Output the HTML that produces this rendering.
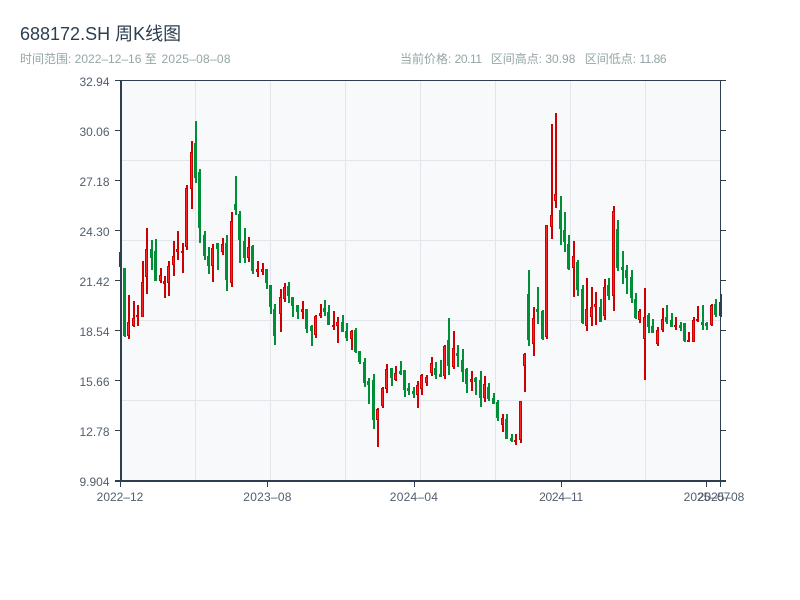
<!DOCTYPE html>
<html lang="zh">
<head>
<meta charset="utf-8">
<title>688172.SH 周K线图</title>
<style>
html,body{margin:0;padding:0;background:#fff;width:800px;height:600px;overflow:hidden}
svg{display:block}
text{font-family:"Liberation Sans","Noto Sans CJK SC",sans-serif}
</style>
</head>
<body>
<svg width="800" height="600" viewBox="0 0 800 600" xmlns="http://www.w3.org/2000/svg">
<rect x="0" y="0" width="800" height="600" fill="#fff"/>
<text x="20" y="40" font-size="18" fill="#2c3e50">688172.SH 周K线图</text>
<text x="20" y="63" font-size="12" fill="#95a5a6">时间范围: 2022–12–16 至</text>
<text x="161.5" y="63" font-size="12" fill="#95a5a6" letter-spacing="0.25">2025–08–08</text>
<text x="400" y="63" font-size="12" fill="#95a5a6">当前价格: <tspan letter-spacing="-0.45">20.11</tspan></text>
<text x="490.7" y="63" font-size="12" fill="#95a5a6">区间高点: 30.98</text>
<text x="584.7" y="63" font-size="12" fill="#95a5a6">区间低点: <tspan letter-spacing="-0.5">11.86</tspan></text>

<rect x="121" y="81" width="600" height="400" fill="#f8f9fb"/>
<path fill="#e2e5eb" d="M195 81h1v400h-1zM270 81h1v400h-1zM345 81h1v400h-1zM420 81h1v400h-1zM495 81h1v400h-1zM570 81h1v400h-1zM645 81h1v400h-1zM121 160h600v1h-600zM121 240h600v1h-600zM121 320h600v1h-600zM121 400h600v1h-600z"/>

<path fill="none" stroke="#008f36" stroke-width="2" d="M125 268V337M152 240V270M156 239V281M196 121V183M200 169V243M205 231V260M209 247V274M218 243V270M227 235V291M236 176V215M240 211V263M245 228V263M253 245V274M267 269V289M271 285V314M275 304V345M289 282V303M293 297V317M298 305V319M307 309V333M312 325V346M325 300V316M329 305V325M343 315V332M347 323V341M356 328V353M360 351V364M365 358V387M369 378V404M374 374V429M392 368V386M401 361V375M405 370V397M409 383V395M414 387V398M436 362V379M441 360V377M449 318V375M458 345V367M463 349V382M467 368V393M476 377V395M481 371V407M489 383V401M494 393V404M498 400V421M507 414V439M512 434V442M529 270V346M538 287V324M543 310V340M561 196V245M565 212V252M569 235V270M578 260V296M583 285V324M601 299V322M609 278V300M618 220V271M623 251V284M627 265V294M632 270V303M636 293V319M649 313V333M653 319V333M667 305V324M672 313V327M681 322V331M685 323V342M703 305V330M707 322V330M716 299V317"/>
<path fill="#008f36" d="M123 268h3V336h-3zM150 249h3V258h-3zM154 251h3V281h-3zM194 143h3V178h-3zM198 172h3V228h-3zM203 235h3V256h-3zM207 256h3V266h-3zM216 243h3V249h-3zM225 243h3V280h-3zM234 204h3V210h-3zM238 214h3V240h-3zM243 241h3V258h-3zM251 246h3V271h-3zM265 269h3V283h-3zM269 285h3V307h-3zM273 309h3V336h-3zM287 286h3V296h-3zM291 297h3V306h-3zM296 305h3V312h-3zM305 309h3V329h-3zM310 326h3V331h-3zM323 308h3V312h-3zM327 312h3V325h-3zM341 322h3V332h-3zM345 331h3V338h-3zM354 330h3V352h-3zM358 351h3V362h-3zM363 362h3V383h-3zM367 381h3V385h-3zM372 380h3V420h-3zM390 368h3V378h-3zM399 371h3V374h-3zM403 370h3V390h-3zM407 388h3V391h-3zM412 391h3V394h-3zM434 368h3V375h-3zM439 374h3V377h-3zM447 340h3V366h-3zM456 353h3V356h-3zM461 360h3V372h-3zM465 369h3V384h-3zM474 378h3V382h-3zM479 380h3V398h-3zM487 387h3V399h-3zM492 398h3V404h-3zM496 402h3V418h-3zM505 419h3V439h-3zM510 438h3V441h-3zM527 294h3V340h-3zM536 309h3V312h-3zM541 311h3V339h-3zM559 210h3V229h-3zM563 230h3V242h-3zM567 244h3V269h-3zM576 262h3V290h-3zM581 289h3V323h-3zM599 307h3V322h-3zM607 285h3V296h-3zM616 229h3V268h-3zM621 267h3V270h-3zM625 270h3V278h-3zM630 277h3V298h-3zM634 299h3V318h-3zM647 315h3V327h-3zM651 326h3V333h-3zM665 317h3V322h-3zM670 320h3V327h-3zM679 325h3V328h-3zM683 323h3V341h-3zM701 322h3V325h-3zM705 323h3V326h-3zM714 304h3V315h-3z"/>

<path fill="none" stroke="#cc0000" stroke-width="2" d="M120 252V267M129 295V339M134 301V327M138 305V326M143 261V317M147 228V294M161 268V283M165 276V298M169 261V296M174 241V276M178 231V260M183 243V273M187 185V250M192 141V209M213 244V282M223 238V255M232 212V287M249 237V262M258 261V277M263 263V275M281 289V332M285 283V302M303 301V319M316 315V338M321 304V318M334 311V330M338 317V343M352 330V350M378 408V447M383 387V408M387 364V393M396 366V381M418 381V408M422 374V395M427 375V386M432 357V376M445 345V379M454 331V369M472 371V391M485 376V402M503 414V432M516 434V445M521 401V443M525 353V392M534 307V356M547 225V339M552 124V239M556 113V208M574 241V297M587 278V331M592 287V326M596 292V325M605 279V320M614 206V311M640 309V323M645 288V380M658 327V346M663 308V332M676 317V330M689 332V342M694 317V342M698 306V322M712 304V326M721 294V317"/>
<path fill="#ff2222" stroke="#cc0000" stroke-width="1" d="M127.5 322.5h2V335.5h-2zM132.5 318.5h2V325.5h-2zM136.5 315.5h2V316.5h-2zM141.5 282.5h2V316.5h-2zM145.5 249.5h2V276.5h-2zM159.5 275.5h2V280.5h-2zM163.5 281.5h2V283.5h-2zM167.5 266.5h2V282.5h-2zM172.5 256.5h2V264.5h-2zM176.5 249.5h2V251.5h-2zM181.5 251.5h2V252.5h-2zM185.5 188.5h2V246.5h-2zM190.5 152.5h2V188.5h-2zM211.5 248.5h2V265.5h-2zM221.5 244.5h2V251.5h-2zM230.5 221.5h2V282.5h-2zM247.5 247.5h2V257.5h-2zM256.5 269.5h2V271.5h-2zM261.5 269.5h2V271.5h-2zM279.5 297.5h2V313.5h-2zM283.5 287.5h2V298.5h-2zM301.5 309.5h2V311.5h-2zM314.5 316.5h2V334.5h-2zM319.5 313.5h2V315.5h-2zM332.5 325.5h2V326.5h-2zM336.5 322.5h2V325.5h-2zM350.5 331.5h2V338.5h-2zM376.5 409.5h2V419.5h-2zM381.5 388.5h2V405.5h-2zM385.5 369.5h2V388.5h-2zM394.5 373.5h2V379.5h-2zM416.5 385.5h2V394.5h-2zM420.5 375.5h2V388.5h-2zM425.5 377.5h2V382.5h-2zM430.5 363.5h2V372.5h-2zM443.5 346.5h2V375.5h-2zM452.5 348.5h2V366.5h-2zM470.5 379.5h2V381.5h-2zM483.5 384.5h2V397.5h-2zM501.5 418.5h2V424.5h-2zM514.5 440.5h2V441.5h-2zM519.5 401.5h2V439.5h-2zM523.5 354.5h2V365.5h-2zM532.5 318.5h2V343.5h-2zM545.5 225.5h2V336.5h-2zM550.5 215.5h2V226.5h-2zM554.5 194.5h2V200.5h-2zM572.5 256.5h2V267.5h-2zM585.5 309.5h2V325.5h-2zM590.5 307.5h2V316.5h-2zM594.5 304.5h2V306.5h-2zM603.5 287.5h2V315.5h-2zM612.5 211.5h2V295.5h-2zM638.5 311.5h2V319.5h-2zM643.5 317.5h2V338.5h-2zM656.5 330.5h2V343.5h-2zM661.5 319.5h2V329.5h-2zM674.5 325.5h2V326.5h-2zM687.5 340.5h2V341.5h-2zM692.5 320.5h2V341.5h-2zM696.5 319.5h2V320.5h-2zM710.5 305.5h2V324.5h-2zM719.5 302.5h2V315.5h-2z"/>

<path fill="#2c3e50" d="M115 80h611v1h-611zM720 80h1v402h-1zM120 80h2v402h-2zM115 480h611v2h-611zM115 130h5v1h-5zM115 180h5v1h-5zM115 230h5v1h-5zM115 280h5v1h-5zM115 330h5v1h-5zM115 380h5v1h-5zM115 430h5v1h-5zM721 130h5v1h-5zM721 180h5v1h-5zM721 230h5v1h-5zM721 280h5v1h-5zM721 330h5v1h-5zM721 380h5v1h-5zM721 430h5v1h-5zM120 482h1v5h-1zM267 482h1v5h-1zM414 482h1v5h-1zM561 482h1v5h-1zM706 482h1v5h-1zM720 482h1v5h-1z"/>

<g font-size="12" fill="#525e6e" text-anchor="end">
<text x="109.5" y="86">32.94</text>
<text x="109.5" y="136">30.06</text>
<text x="109.5" y="186">27.18</text>
<text x="109.5" y="236">24.30</text>
<text x="109.5" y="286">21.42</text>
<text x="109.5" y="336">18.54</text>
<text x="109.5" y="386">15.66</text>
<text x="109.5" y="436">12.78</text>
<text x="109.5" y="486">9.904</text>
</g>
<g font-size="12" fill="#525e6e" text-anchor="middle">
<text x="120" y="501">2022–12</text>
<text x="267.5" y="501" letter-spacing="0.25">2023–08</text>
<text x="414" y="501" letter-spacing="0.25">2024–04</text>
<text x="561" y="501" letter-spacing="-0.3">2024–11</text>
<text x="707" y="501">2025–07</text>
<text x="721" y="501">2025–08</text>
</g>
</svg>
</body>
</html>
